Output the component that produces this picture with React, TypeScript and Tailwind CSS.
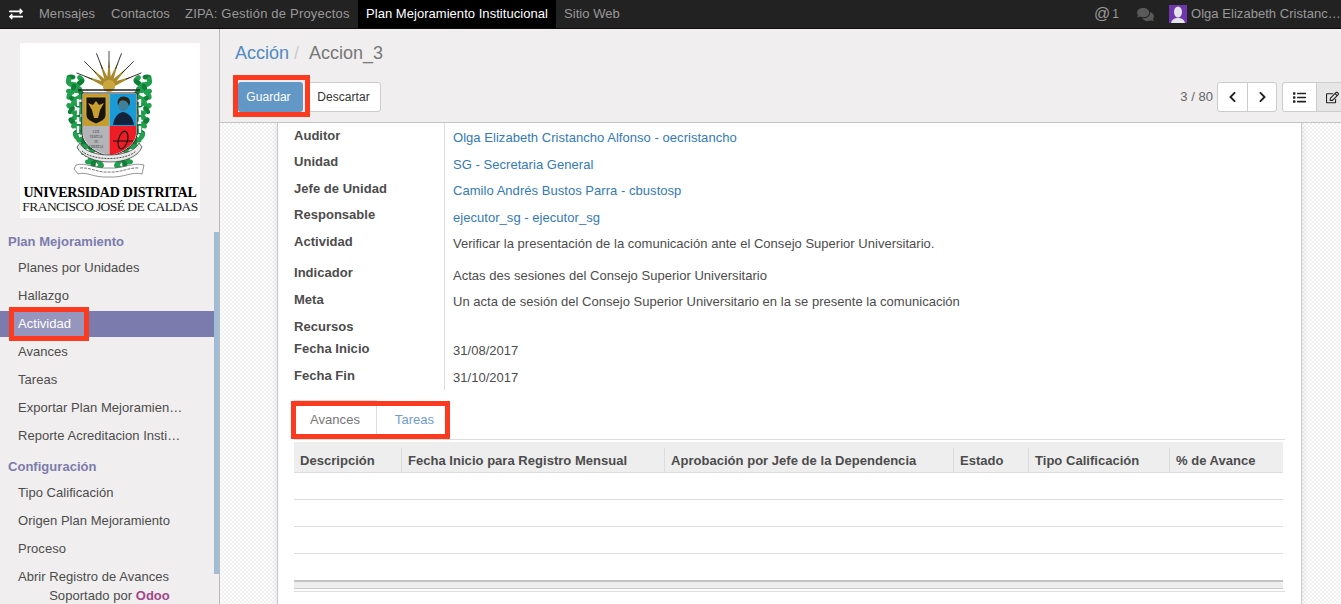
import React from "react";
import { FaExchangeAlt, FaComments, FaChevronLeft, FaChevronRight, FaList, FaRegEdit } from "react-icons/fa";

const leaves: [number, number, number][] = [];
for (let i = 0; i < 52; i++) {
  const t = i / 51;
  const y = 34 + t * 94;
  const spread = i % 2 === 0 ? -4 : 4;
  const x = 55 + spread * (1 - t * 0.4) + Math.sin(i * 2.3) * 2.5 + Math.pow(t, 3) * 26;
  leaves.push([x, y, i * 47]);
}

const Crest = () => {
  const long = [-68, -45, -21, 0, 21, 45, 68];
  return (
    <svg width="180" height="142" viewBox="0 0 180 142" className="block shrink-0">
      <g transform="translate(89 43)">
        {long.map((r) => (
          <g key={r} transform={`rotate(${r})`}>
            <path d="M-2.2 -5 L0 -26 L2.2 -5 Z" fill="#a88a2c" />
            <path d="M0 -35 L0 -18" stroke="#1c1c1c" strokeWidth="0.8" />
          </g>
        ))}
        <circle cx="0" cy="0" r="6.2" fill="#cba63c" />
      </g>
      {leaves.map(([x, y, a], i) => (
        <g key={i}>
          <ellipse cx={x} cy={y} rx="4.4" ry="2.6" fill={i % 3 === 0 ? "#0f7f38" : "#20a04c"} transform={`rotate(${a} ${x} ${y})`} />
          <ellipse cx={178 - x} cy={y} rx="4.4" ry="2.6" fill={i % 3 === 0 ? "#0f7f38" : "#20a04c"} transform={`rotate(${-a} ${178 - x} ${y})`} />
        </g>
      ))}
      <path d="M58 47H120" stroke="#222" strokeWidth="1.6" fill="none" />
      <path d="M58 56V92M120 56V92" stroke="#fff" strokeWidth="2.4" strokeDasharray="7 2" />
      <path d="M62 50H117V90C117 102 103 110 89.5 114C76 110 62 102 62 90Z" fill="#fff" stroke="#222" strokeWidth="1" />
      <path d="M63 51H89.5V83H63Z" fill="#c69c2e" />
      <path d="M89.5 51H116V83H89.5Z" fill="#1a9bd7" />
      <path d="M63 83H89.5V113C77 109 63 102 63 90Z" fill="#b3b4b7" />
      <path d="M89.5 83H116V90C116 102 103 109 89.5 113Z" fill="#ee1c25" />
      <path d="M66 54H86V72C86 77 80 79 76 81C72 79 66 77 66 72Z" fill="#17140c" stroke="#dcb640" strokeWidth="0.8" />
      <path d="M76 58L79 62L84 60L80 67L78 75H74L72 67L68 60L73 62Z" fill="#c9a030" />
      <path d="M101 56C106 54 110 57 109 62C108 66 106 68 103 68C100 68 98 65 98 61C98 58 99 57 101 56Z" fill="#3f7f9a" />
      <path d="M98 62C96 55 102 52 106 54C110 55 111 59 109 63C108 58 104 56 100 58Z" fill="#2c2412" />
      <path d="M93 82C94 74 98 70 103 69C109 70 113 75 114 82Z" fill="#12233b" />
      <text x="76" y="90" textAnchor="middle" fontSize="3" fill="#333" fontFamily="Liberation Serif, serif">LUX</text>
      <text x="76" y="95" textAnchor="middle" fontSize="3" fill="#333" fontFamily="Liberation Serif, serif">VERITAS</text>
      <text x="76" y="100" textAnchor="middle" fontSize="3" fill="#333" fontFamily="Liberation Serif, serif">IN</text>
      <text x="76" y="105" textAnchor="middle" fontSize="3" fill="#333" fontFamily="Liberation Serif, serif">LIBERTAS</text>
      <ellipse cx="103" cy="97" rx="4.5" ry="9" fill="none" stroke="#111" strokeWidth="1.2" transform="rotate(15 103 97)" />
      <path d="M93 98H113" stroke="#111" strokeWidth="1" />
      <path d="M60 100C66 116 112 116 119 100L122 104C114 124 66 124 57 104Z" fill="#e9e9e9" stroke="#333" strokeWidth="0.7" />
      <path d="M62 108C72 118 106 118 116 108" fill="none" stroke="#222" strokeWidth="0.8" strokeDasharray="2 1" />
      <path d="M56 122C66 119 74 126 89 125C104 126 112 119 124 122L122 131C112 128 104 135 89 134C74 135 66 128 58 131L54 126Z" fill="#fff" stroke="#666" strokeWidth="0.7" />
      <path d="M60 125C70 124 78 130 89 129C100 130 110 124 119 125" fill="none" stroke="#777" strokeWidth="1" strokeDasharray="3 1" />
    </svg>
  );
};

const nav = [
  { t: "Mensajes", w: "w-[72px]" },
  { t: "Contactos", w: "w-[74px]" },
  { t: "ZIPA: Gestión de Proyectos", w: "w-[181px] tracking-[0.2px]" },
  { t: "Plan Mejoramiento Institucional", w: "w-[198px] bg-black text-white" },
  { t: "Sitio Web", w: "w-[72px]" },
];
const menu1 = ["Planes por Unidades", "Hallazgo", "Actividad", "Avances", "Tareas", "Exportar Plan Mejoramien…", "Reporte Acreditacion Insti…"];
const menu2 = ["Tipo Calificación", "Origen Plan Mejoramiento", "Proceso", "Abrir Registro de Avances"];
const rows = [
  { l: "Auditor", v: "Olga Elizabeth Cristancho Alfonso - oecristancho", link: true, h: "h-[27px]", p: "pt-[6px]", lp: "pt-[4px]" },
  { l: "Unidad", v: "SG - Secretaria General", link: true, h: "h-[26px]", p: "pt-[6px]", lp: "pt-[3px]" },
  { l: "Jefe de Unidad", v: "Camilo Andrés Bustos Parra - cbustosp", link: true, h: "h-[27px]", p: "pt-[6px]", lp: "pt-[4px]" },
  { l: "Responsable", v: "ejecutor_sg - ejecutor_sg", link: true, h: "h-[26px]", p: "pt-[6px]", lp: "pt-[3px]" },
  { l: "Actividad", v: "Verificar la presentación de la comunicación ante el Consejo Superior Universitario.", h: "h-[31px]", p: "pt-[6px]", lp: "pt-[4px]" },
  { l: "Indicador", v: "Actas des sesiones del Consejo Superior Universitario", h: "h-[27px]", p: "pt-[7px]", lp: "pt-[4px]" },
  { l: "Meta", v: "Un acta de sesión del Consejo Superior Universitario en la se presente la comunicación", h: "h-[27px]", p: "pt-[6px]", lp: "pt-[4px]" },
  { l: "Recursos", v: "", h: "h-[22px]", p: "pt-[6px]", lp: "pt-[4px]" },
  { l: "Fecha Inicio", v: "31/08/2017", h: "h-[27px]", p: "pt-[6px]", lp: "pt-[4px]" },
  { l: "Fecha Fin", v: "31/10/2017", h: "h-[27px]", p: "pt-[6px]", lp: "pt-[4px]" },
];
const cols = [
  { t: "Descripción", w: "w-[108px]" },
  { t: "Fecha Inicio para Registro Mensual", w: "w-[263px]" },
  { t: "Aprobación por Jefe de la Dependencia", w: "w-[289px]" },
  { t: "Estado", w: "w-[75px]" },
  { t: "Tipo Calificación", w: "w-[141px]" },
  { t: "% de Avance", w: "flex-1" },
];

const MenuItem = ({ t }: { t: string }) => (
  <div className={`h-[26px] mb-[2px] pl-[18px] flex items-center whitespace-nowrap ${t === "Actividad" ? "bg-[#7c7bad] text-white" : "text-[#4c4c4c]"}`}>{t}</div>
);

export default function App() {
  return (
    <div className="relative h-[604px] w-[1341px] overflow-hidden flex flex-col bg-white text-[13px] leading-[18px] tracking-[0.04px] text-[#4c4c4c] font-['Liberation_Sans',Arial,sans-serif]">
      <header className="h-[29px] shrink-0 bg-[#222222] border-b border-[#0d0d0d] flex items-center text-[#999999]">
        <FaExchangeAlt className="ml-[9px] mr-[8px] w-[14px] h-[14px] text-white" />
        <nav className="flex h-full">
          {nav.map((n) => (
            <div key={n.t} className={`${n.w} pl-[8px] flex items-center whitespace-nowrap`}>{n.t}</div>
          ))}
        </nav>
        <div className="ml-auto flex items-center whitespace-nowrap">
          <span className="text-[16px]">@</span>
          <span className="ml-[2px] text-[12px]">1</span>
          <FaComments className="ml-[18px] w-[17px] h-[15px] text-[#5a5a5a]" />
          <div className="ml-[15px] w-[18px] h-[18px] bg-[#6f36ad] overflow-hidden">
            <svg viewBox="0 0 18 18" className="w-[18px] h-[18px]"><ellipse cx="9" cy="7" rx="4" ry="5.5" fill="#e4e4ea" /><path d="M2 18C3 14 6 13 9 13C12 13 15 14 16 18Z" fill="#e4e4ea" /></svg>
          </div>
          <span className="ml-[4px] w-[150px] overflow-hidden">Olga Elizabeth Cristanc…</span>
        </div>
      </header>

      <div className="flex flex-1 min-h-0">
        <aside className="relative w-[220px] shrink-0 bg-[#f0eeee] border-r border-[#b9b9b9] flex">
          <div className="flex-1 min-w-0 flex flex-col">
            <div className="mt-[14px] ml-[20px] w-[180px] h-[175px] bg-white flex flex-col items-center overflow-hidden">
              <Crest />
              <div className="text-black font-['Liberation_Serif',serif] font-bold text-[14px] leading-[15px] tracking-[-0.25px] whitespace-nowrap">UNIVERSIDAD DISTRITAL</div>
              <div className="text-[#222] font-['Liberation_Serif',serif] text-[13.5px] leading-[14px] tracking-[-0.55px] whitespace-nowrap">FRANCISCO JOSÉ DE CALDAS</div>
            </div>
            <div className="h-[21px] mt-[13px] pl-[8px] flex items-center font-bold tracking-[0.03px] text-[#7c7bad]">Plan Mejoramiento</div>
            <div className="mt-[3px]">
              {menu1.map((m) => <MenuItem key={m} t={m} />)}
            </div>
            <div className="h-[21px] mt-[5px] pl-[8px] flex items-center font-bold tracking-[0.03px] text-[#7c7bad]">Configuración</div>
            <div className="mt-[3px]">
              {menu2.map((m) => <MenuItem key={m} t={m} />)}
            </div>
          </div>
          <div className="w-[5px] shrink-0 pt-[203px] pb-[30px]">
            <div className="h-full bg-[#a0bcd6]" />
          </div>
          <div className="absolute left-0 right-0 bottom-0 h-[17px] bg-[#f0eeee] flex items-center justify-center text-[#4c4c4c] whitespace-nowrap">
            <span>Soportado por&nbsp;<b className="text-[#a24689]">Odoo</b></span>
          </div>
        </aside>

        <main className="flex-1 min-w-0 flex flex-col overflow-hidden">
          <div className="h-[94px] shrink-0 bg-[#f0eeee] border-b border-[#c4c4c4] pl-[15px] pt-[13px]">
            <div className="text-[18px] leading-[22px] tracking-normal whitespace-nowrap">
              <span className="text-[#4f8bc4]">Acción</span>
              <span className="text-[#ccc] ml-[5px] mr-[6px]">/</span>
              <span className="text-[#777]"> Accion_3</span>
            </div>
            <div className="mt-[18px] flex items-center">
              <div className="ml-[3px] h-[30px] w-[65px] pr-[4px] rounded-[3px] bg-[#6397c5] text-white text-[12px] flex items-center justify-center">Guardar</div>
              <div className="ml-[5px] h-[30px] w-[73px] pr-[2px] rounded-[3px] bg-white border border-[#ccc] text-[#333] text-[12px] flex items-center justify-center">Descartar</div>
              <div className="ml-auto flex items-center mr-[-7px]">
                <span className="text-[#666] mr-[4px]">3 / 80</span>
                <div className="flex h-[30px] w-[60px] bg-white border border-[#ccc] rounded-[3px] text-[#222]">
                  <div className="w-[30px] border-r border-[#ccc] flex items-center justify-center"><FaChevronLeft className="w-[11px] h-[12px]" /></div>
                  <div className="flex-1 flex items-center justify-center"><FaChevronRight className="w-[11px] h-[12px]" /></div>
                </div>
                <div className="flex h-[30px] ml-[5px] w-[66px] bg-white border border-[#ccc] rounded-[3px] text-[#222]">
                  <div className="w-[33px] flex items-center justify-center"><FaList className="w-[13px] h-[13px]" /></div>
                  <div className="flex-1 bg-[#e6e6e6] border-l border-[#ccc] flex items-center justify-center"><FaRegEdit className="w-[13px] h-[13px]" /></div>
                </div>
              </div>
            </div>
          </div>

          <div className="flex-1 min-h-0 bg-[repeating-conic-gradient(#f0f0f0_0_25%,#ffffff_0_50%)] bg-[length:4px_4px] pl-[57px] pr-[39px] overflow-hidden">
            <div className="h-full bg-white border-x border-[#c8c8d0] shadow-[0_0_8px_rgba(0,0,0,0.1)] pl-[16px] pr-[16px]">
              <div className="w-[990px]">
                {rows.map((r) => (
                  <div key={r.l} className={`flex ${r.h}`}>
                    <div className={`w-[151px] shrink-0 font-bold tracking-[0.03px] border-r border-[#ddd] pr-2 ${r.lp} h-full`}>{r.l}</div>
                    <div className={`pl-[8px] ${r.p} whitespace-nowrap ${r.link ? "text-[#337ab7]" : "text-[#4c4c4c] tracking-[0.02px]"}`}>{r.v}</div>
                  </div>
                ))}
              </div>
              <div className="mt-[10px] w-[991px] h-[40px] flex border-b border-[#ddd] text-[#777]">
                <div className="w-[83px] flex items-center justify-center border-r border-t border-[#ddd] bg-white">Avances</div>
                <div className="w-[75px] flex items-center justify-center text-[#6d9dcf]">Tareas</div>
              </div>
              <div className="mt-[2px] w-[989px]">
                <div className="h-[31px] flex bg-[#eeeeee] border-b border-[#dddddd] font-bold tracking-[0.03px]">
                  {cols.map((c, i) => (
                    <div key={c.t} className={`${c.w} mt-[6px] pt-[1px] flex items-center whitespace-nowrap pl-[6px] ${i < 5 ? "border-r border-[#dddddd]" : ""}`}>{c.t}</div>
                  ))}
                </div>
                <div className="h-[27px] border-b border-[#ddd]" />
                <div className="h-[27px] border-b border-[#ddd]" />
                <div className="h-[27px] border-b border-[#ddd]" />
                <div className="h-[28px] border-b-2 border-[#c4c4c4]" />
                <div className="h-[7px] bg-[#eeeeee] border-b border-[#ccc]" />
              </div>
              <div className="mt-[2px] w-[991px] border-b border-[#ddd]" />
            </div>
          </div>
        </main>
      </div>

      <div className="pointer-events-none absolute left-[233px] top-[75px] w-[77px] h-[42px] border-[5px] border-[#fb3a20]" />
      <div className="pointer-events-none absolute left-[9px] top-[307px] w-[80px] h-[34px] border-[5px] border-[#fb3a20] bg-white/20" />
      <div className="pointer-events-none absolute left-[291px] top-[401px] w-[159px] h-[38px] border-[5px] border-[#fb3a20]" />
    </div>
  );
}
